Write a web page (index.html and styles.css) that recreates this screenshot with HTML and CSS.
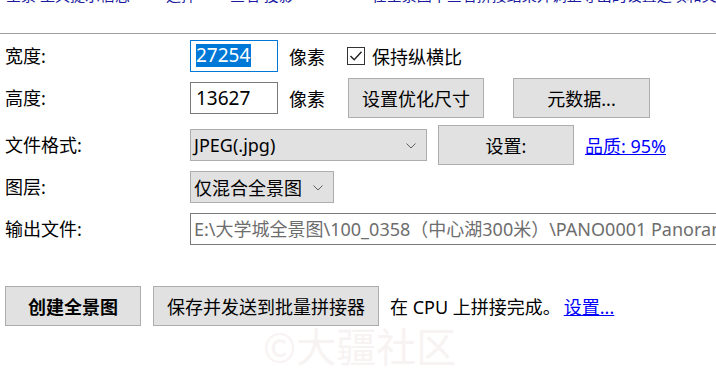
FILE: index.html
```html
<!DOCTYPE html>
<html lang="zh-CN">
  <head>
    <meta charset="UTF-8" />
    <title>导出全景图</title>
    <link rel="stylesheet" href="styles.css">
  </head>
  <body>
  <div class="top-strip">
    <div class="top-links">
      <span class="l1">全景 工具提示信息</span>
      <span class="l2">选择</span>
      <span class="l3">查看 投影</span>
      <span class="l4">在全景图中查看拼接结果并调整导出的设置选项和文件</span>
    </div>
  </div>
  <div class="divider"></div>

  <div class="panel">
    <div class="row row-1">
      <span class="label">宽度:</span>
      <div class="field is-focus"><span class="selected">27254</span></div>
      <span class="unit">像素</span>
      <label class="check">
        <svg width="18" height="18" viewBox="0 0 18 18">
          <rect x="0.5" y="0.5" width="17" height="17" fill="#fff" stroke="#333" />
          <polyline points="3.5,9 7.2,12.8 14.5,4.8" fill="none" stroke="#222" stroke-width="1.4" />
        </svg>
        保持纵横比
      </label>
    </div>

    <div class="row row-2">
      <span class="label">高度:</span>
      <div class="field">13627</div>
      <span class="unit">像素</span>
      <button class="btn btn-optimize">设置优化尺寸</button>
      <button class="btn btn-meta">元数据...</button>
    </div>

    <div class="row row-3">
      <span class="label">文件格式:</span>
      <div class="select select-format">
        <span>JPEG(.jpg)</span>
        <svg class="chevron" width="10" height="6" viewBox="0 0 10 6">
          <polyline points="0.5,0.5 5,5 9.5,0.5" fill="none" stroke="#606060" stroke-width="1" />
        </svg>
      </div>
      <button class="btn btn-settings">设置:</button>
      <a class="link" href="#">品质: 95%</a>
    </div>

    <div class="row row-4">
      <span class="label">图层:</span>
      <div class="select select-layer">
        <span>仅混合全景图</span>
        <svg class="chevron" width="10" height="6" viewBox="0 0 10 6">
          <polyline points="0.5,0.5 5,5 9.5,0.5" fill="none" stroke="#606060" stroke-width="1" />
        </svg>
      </div>
    </div>

    <div class="row row-5">
      <span class="label">输出文件:</span>
      <div class="field field-path">E:\大学城全景图\100_0358（中心湖300米）\PANO0001 Panorama.jpg</div>
    </div>

    <div class="row row-6">
      <button class="btn btn-create">创建全景图</button>
      <button class="btn btn-batch">保存并发送到批量拼接器</button>
      <span class="status">在 CPU 上拼接完成。</span>
      <a class="link" href="#">设置...</a>
    </div>
  </div>

  <div class="watermark">©大疆社区</div>
  </body>
</html>
```

FILE: styles.css
```css
* {
  margin: 0;
  padding: 0;
  box-sizing: border-box;
}

body {
  width: 716px;
  height: 376px;
  overflow: hidden;
  background: #fff;
  color: #000;
  font-family: "Noto Sans", "Noto Sans CJK SC", sans-serif;
  font-size: 18px;
  position: relative;
}

.top-strip {
  height: 33px;
}

.top-links {
  height: 3px;
  overflow: hidden;
  display: flex;
  align-items: flex-end;
  color: #1a1aa0;
  font-size: 15px;
  line-height: 15px;
  white-space: nowrap;
}

.top-links .l1 { margin-left: 6px; }
.top-links .l2 { margin-left: 36px; }
.top-links .l3 { margin-left: 34px; }
.top-links .l4 { margin-left: 78px; }

.divider {
  height: 1px;
  background: #a0a0a0;
}

.panel {
  padding-left: 5px;
}

.row {
  display: flex;
  align-items: center;
  white-space: nowrap;
}

.row > * {
  flex-shrink: 0;
}

.row-1 { margin-top: 4px; height: 35px; }
.row-2 { margin-top: 5px; height: 40px; }
.row-3 { margin-top: 7px; height: 40px; }
.row-4 { margin-top: 4px; height: 36px; }
.row-5 { margin-top: 6px; height: 36px; }
.row-6 { margin-top: 39px; height: 40px; }

.label {
  width: 185px;
  line-height: 20px;
}

.field {
  width: 88px;
  height: 32px;
  border: 1px solid #7a7a7a;
  padding-left: 5px;
  display: flex;
  align-items: center;
  font-size: 19px;
  line-height: 24px;
}

.field.is-focus {
  border-color: #0078d7;
}

.selected {
  background: #0078d7;
  color: #fff;
  padding-right: 1px;
  line-height: 23px;
}

.field-path {
  width: 560px;
  padding-left: 3px;
  color: #6d6d6d;
  font-size: 18px;
  overflow: hidden;
}

.unit {
  margin-left: 11px;
}

.check {
  margin-left: 22px;
  display: flex;
  align-items: center;
  gap: 7px;
}

.btn {
  height: 40px;
  background: #e1e1e1;
  border: 1px solid #adadad;
  font-family: inherit;
  font-size: 18px;
  color: #000;
}

.btn-optimize { width: 136px; margin-left: 23px; }
.btn-meta { width: 137px; margin-left: 29px; }
.btn-settings { width: 136px; margin-left: 11px; }
.btn-create { width: 136px; font-weight: bold; }
.btn-batch { width: 226px; margin-left: 12px; }

.select {
  height: 32px;
  background: #e1e1e1;
  border: 1px solid #adadad;
  display: flex;
  align-items: center;
  justify-content: space-between;
  padding: 0 10px 0 3px;
}

.select-format { width: 237px; }
.select-layer { width: 144px; }

.chevron {
  margin-top: 1px;
}

.link {
  color: #0000ff;
  margin-left: 11px;
}

.status {
  margin-left: 11px;
}

.row-6 .link {
  margin-left: 3px;
}

.watermark {
  position: absolute;
  left: 263px;
  top: 320px;
  font-size: 40px;
  line-height: 50px;
  color: #f8f3f3;
  font-family: "Noto Sans CJK SC", sans-serif;
}
```
